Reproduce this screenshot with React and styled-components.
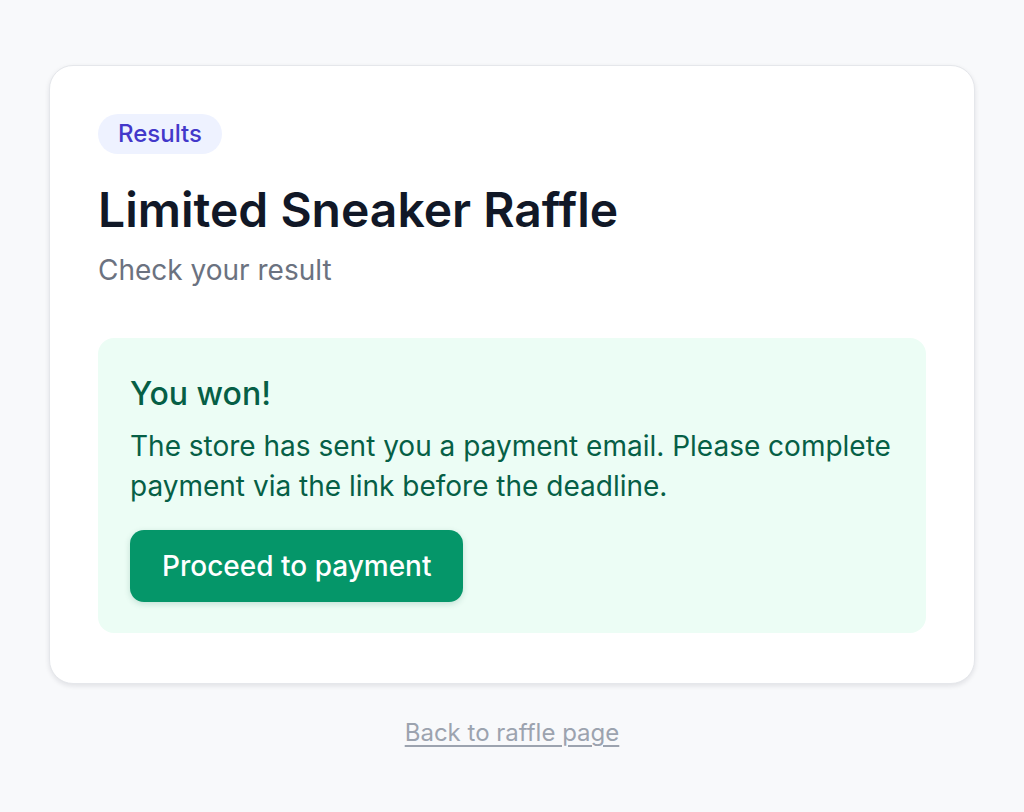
import React from 'react'
import styled, { createGlobalStyle } from 'styled-components'

const GlobalStyle = createGlobalStyle`
  html, body {
    margin: 0;
    padding: 0;
    background: #f8f9fb;
    font-family: Inter, "Noto Sans", sans-serif;
  }
  * { box-sizing: border-box; }
`

const Page = styled.main`
  min-height: 100vh;
  padding: 65px 49px 40px;
  display: flex;
  flex-direction: column;
  align-items: center;
`

const Card = styled.section`
  width: 100%;
  background: #fff;
  border: 1px solid #e5e7eb;
  border-radius: 24px;
  box-shadow: 0 2px 5px rgba(17, 24, 39, 0.1);
  padding: 48px 48px 50px;
`

const Badge = styled.span`
  display: inline-block;
  height: 40px;
  padding: 0 20px;
  line-height: 40px;
  border-radius: 20px;
  background: #eef2ff;
  color: #4338ca;
  font-size: 24px;
  font-weight: 500;
`

const Title = styled.h1`
  margin: 26px 0 0;
  font-size: 48px;
  line-height: 60px;
  font-weight: 600;
  color: #111827;
`

const Subtitle = styled.p`
  margin: 10px 0 0;
  font-size: 28px;
  line-height: 40px;
  color: #6b7280;
`

const ResultBox = styled.div`
  margin-top: 48px;
  background: #ecfdf5;
  border-radius: 16px;
  padding: 36px 32px 31px;
`

const ResultTitle = styled.h2`
  margin: 0;
  font-size: 32px;
  line-height: 40px;
  font-weight: 500;
  color: #065f46;
`

const ResultText = styled.p`
  margin: 12px 0 0;
  font-size: 28px;
  line-height: 40px;
  color: #065f46;
`

const PayButton = styled.button`
  margin-top: 24px;
  height: 72px;
  padding: 0 32px;
  border: none;
  border-radius: 14px;
  background: #059669;
  color: #fff;
  font-family: inherit;
  font-size: 28px;
  font-weight: 500;
  box-shadow: 0 2px 6px rgba(6, 95, 70, 0.18);
  cursor: pointer;
`

const BackLink = styled.a`
  margin-top: 33px;
  font-size: 24px;
  line-height: 32px;
  color: #9ca3af;
  text-decoration: underline;
  text-underline-offset: 4px;
  text-decoration-thickness: 2px;
`

export default function App() {
  return (
    <>
      <GlobalStyle />
      <Page>
        <Card>
          <Badge>Results</Badge>
          <Title>Limited Sneaker Raffle</Title>
          <Subtitle>Check your result</Subtitle>
          <ResultBox>
            <ResultTitle>You won!</ResultTitle>
            <ResultText>
              The store has sent you a payment email. Please complete payment via the link before the deadline.
            </ResultText>
            <PayButton>Proceed to payment</PayButton>
          </ResultBox>
        </Card>
        <BackLink href="#">Back to raffle page</BackLink>
      </Page>
    </>
  )
}
